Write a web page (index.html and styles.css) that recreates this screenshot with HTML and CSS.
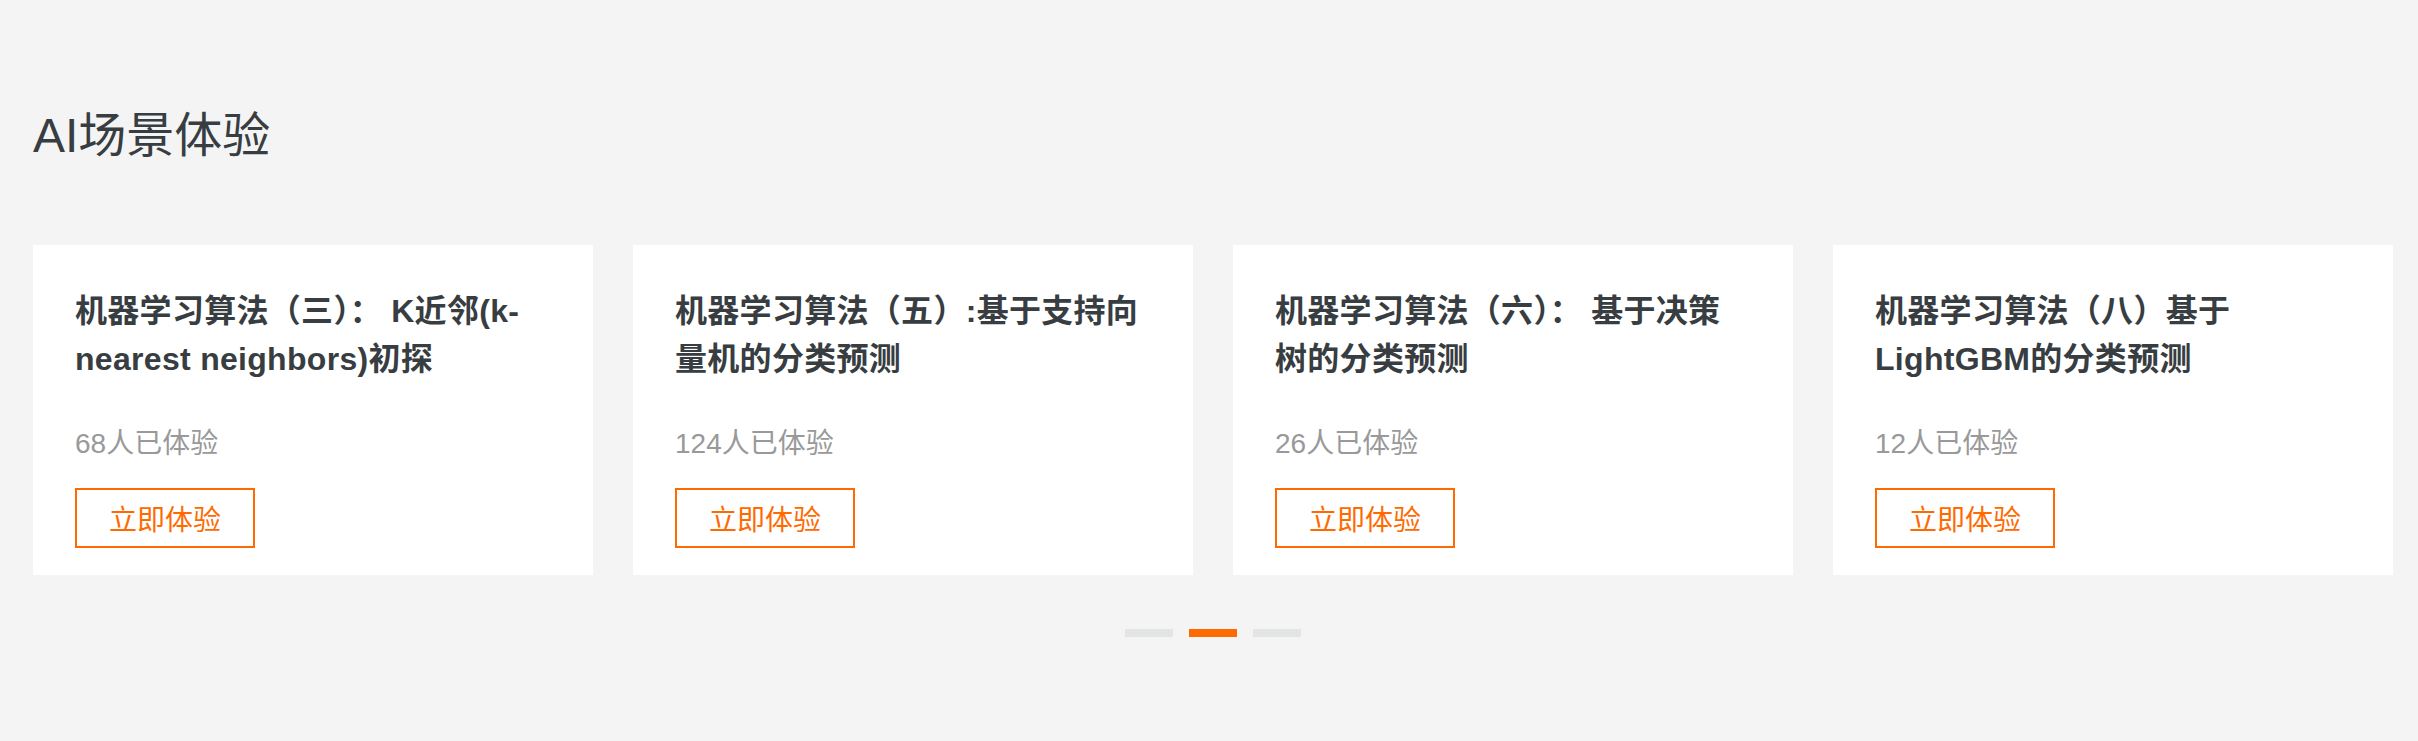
FILE: index.html
```html
<!DOCTYPE html>
<html lang="zh-CN">
<head>
<meta charset="utf-8">
<title>AI场景体验</title>
<link rel="stylesheet" href="styles.css">
</head>
<body>
<section class="scene">
  <h2 class="scene-title">AI场景体验</h2>
  <div class="cards">
    <div class="card">
      <h3 class="card-title">机器学习算法（三）： K近邻(k-nearest neighbors)初探</h3>
      <p class="card-count">68人已体验</p>
      <a class="card-btn" href="#">立即体验</a>
    </div>
    <div class="card">
      <h3 class="card-title">机器学习算法（五）:基于支持向量机的分类预测</h3>
      <p class="card-count">124人已体验</p>
      <a class="card-btn" href="#">立即体验</a>
    </div>
    <div class="card">
      <h3 class="card-title">机器学习算法（六）： 基于决策树的分类预测</h3>
      <p class="card-count">26人已体验</p>
      <a class="card-btn" href="#">立即体验</a>
    </div>
    <div class="card">
      <h3 class="card-title">机器学习算法（八）基于LightGBM的分类预测</h3>
      <p class="card-count">12人已体验</p>
      <a class="card-btn" href="#">立即体验</a>
    </div>
  </div>
  <div class="dots">
    <span class="dot"></span>
    <span class="dot active"></span>
    <span class="dot"></span>
  </div>
</section>
</body>
</html>
```
FILE: styles.css
```css
html, body {
  margin: 0;
  padding: 0;
  background: #f4f4f4;
}
body {
  font-family: "Liberation Sans", "Noto Sans CJK SC", sans-serif;
  color: #373d41;
}
.scene {
  width: 2360px;
  padding: 104px 0 0 33px;
}
.scene-title {
  margin: 0;
  font-size: 48px;
  line-height: 64px;
  font-weight: normal;
  color: #373d41;
}
.cards {
  display: grid;
  grid-template-columns: repeat(4, 560px);
  gap: 40px;
  margin-top: 77px;
}
.card {
  background: #fff;
  height: 330px;
  box-sizing: border-box;
  padding: 42px 50px 0 42px;
}
.card-title {
  margin: 0;
  font-size: 32px;
  line-height: 48px;
  font-weight: bold;
  color: #373d41;
  height: 96px;
  letter-spacing: 0.3px;
}
.card-count {
  margin: 41px 0 0 0;
  font-size: 28px;
  line-height: 40px;
  color: #999;
}
.card-btn {
  display: flex;
  align-items: center;
  justify-content: center;
  margin-top: 24px;
  width: 180px;
  height: 60px;
  box-sizing: border-box;
  border: 2px solid #ff6a00;
  color: #ff6a00;
  font-size: 28px;
  text-decoration: none;
}
.dots {
  display: flex;
  justify-content: center;
  gap: 16px;
  margin-top: 54px;
}
.dot {
  width: 48px;
  height: 8px;
  background: #e3e4e4;
}
.dot.active {
  background: #ff6a00;
}
```
